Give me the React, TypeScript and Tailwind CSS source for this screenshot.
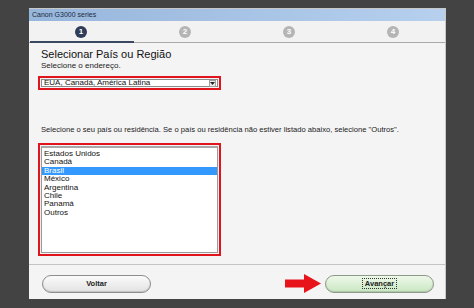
const countries = [
  "Estados Unidos",
  "Canadá",
  "Brasil",
  "México",
  "Argentina",
  "Chile",
  "Panamá",
  "Outros",
];

const Step = ({ n, active }: { n: number; active?: boolean }) => (
  <div className="flex items-center justify-center">
    <div
      className={
        "flex h-[12px] w-[12px] items-center justify-center rounded-full text-[8px] font-bold leading-none text-white " +
        (active ? "bg-[#2f3d58]" : "bg-[#b5b5b5]")
      }
    >
      {n}
    </div>
  </div>
);

export default function App() {
  return (
    <div
      className="h-[308px] w-[474px] overflow-hidden bg-[#434343] pl-[29px] pt-[8px]"
      style={{ fontFamily: '"Liberation Sans", Arial, sans-serif' }}
    >
      <div className="flex h-[291px] w-[417px] flex-col border-t border-r border-[#c8c8c8] bg-[#f4f4f4]">
        {/* title bar */}
        <div className="flex h-[12px] items-center bg-gradient-to-r from-[#97b6dc] to-[#b6d0ee] pl-[3px] text-[7px] text-[#1c2a40]">
          Canon G3000 series
        </div>

        {/* steps */}
        <div className="relative grid h-[22px] grid-cols-4 border-b border-[#a9a9a9] bg-[#f2f2f2]">
          <Step n={1} active />
          <Step n={2} />
          <Step n={3} />
          <Step n={4} />
          <div className="absolute bottom-[-1px] left-[1px] h-[2px] w-[104px] bg-[#3b4862]" />
        </div>

        {/* content */}
        <div className="flex flex-col px-[12px]">
          <div className="mt-[5px] text-[11px] leading-[12px] text-[#111]">
            Selecionar País ou Região
          </div>
          <div className="mt-[1px] text-[8px] leading-[10px] text-[#222]">
            Selecione o endereço.
          </div>

          <div className="-ml-[3px] mt-[5px] h-[14px] w-[183px] border-2 border-[#e0141c] p-[1px]">
            <div className="flex h-full items-center justify-between border border-[#8c8c8c] bg-white pl-[2px] pr-[1px]">
              <span className="text-[8px] leading-none text-[#111]">
                EUA, Canadá, América Latina
              </span>
              <div className="flex h-[7px] w-[7px] items-center justify-center border border-[#a0a0a0] bg-[#ececec]">
                <svg width="5" height="3" viewBox="0 0 5 3">
                  <path d="M0 0 H5 L2.5 3 Z" fill="#222" />
                </svg>
              </div>
            </div>
          </div>

          <div className="mt-[35px] whitespace-nowrap text-[7.6px] leading-[10px] text-[#222]">
            Selecione o seu país ou residência. Se o país ou residência não
            estiver listado abaixo, selecione "Outros".
          </div>

          <div className="-ml-[3px] mt-[8px] h-[113px] w-[183px] border-2 border-[#e0141c] p-[1px]">
            <div className="h-full border border-t-2 border-[#9a9a9a] border-t-[#a8a8a8] bg-white pt-[2px]">
              {countries.map((c) => (
                <div
                  key={c}
                  className={
                    "h-[8.4px] pl-[2px] text-[8px] leading-[8.4px] " +
                    (c === "Brasil" ? "bg-[#3399ff] text-white" : "text-[#111]")
                  }
                >
                  {c}
                </div>
              ))}
            </div>
          </div>
        </div>

        <div className="mt-[8px] h-px bg-[#c4c4c4]" />

        {/* buttons */}
        <div className="mt-[9px] flex items-center justify-between pl-[13px] pr-[11px]">
          <button className="flex h-[18px] w-[109px] items-center justify-center rounded-full border border-[#8d8d8d] bg-gradient-to-b from-[#fbfbfb] to-[#e2e2e2] text-[7.5px] font-bold text-[#222] shadow-[inset_0_-1px_1px_rgba(0,0,0,0.15)]">
            Voltar
          </button>
          <div className="flex items-center gap-[4px]">
            <svg width="36" height="19" viewBox="0 0 36 19">
              <path d="M0 5.5 H19 V0 L36 9.5 L19 19 V13.5 H0 Z" fill="#e8141c" />
            </svg>
            <button className="flex h-[18px] w-[109px] items-center justify-center rounded-full border border-[#8d9a8a] bg-gradient-to-b from-[#eef8ea] to-[#c9e7c2] text-[7.5px] font-bold text-[#222] shadow-[inset_0_-1px_1px_rgba(0,0,0,0.15)]">
              <span className="border border-dotted border-[#333] px-[2px] leading-[9px]">
                Avançar
              </span>
            </button>
          </div>
        </div>
      </div>
    </div>
  );
}
